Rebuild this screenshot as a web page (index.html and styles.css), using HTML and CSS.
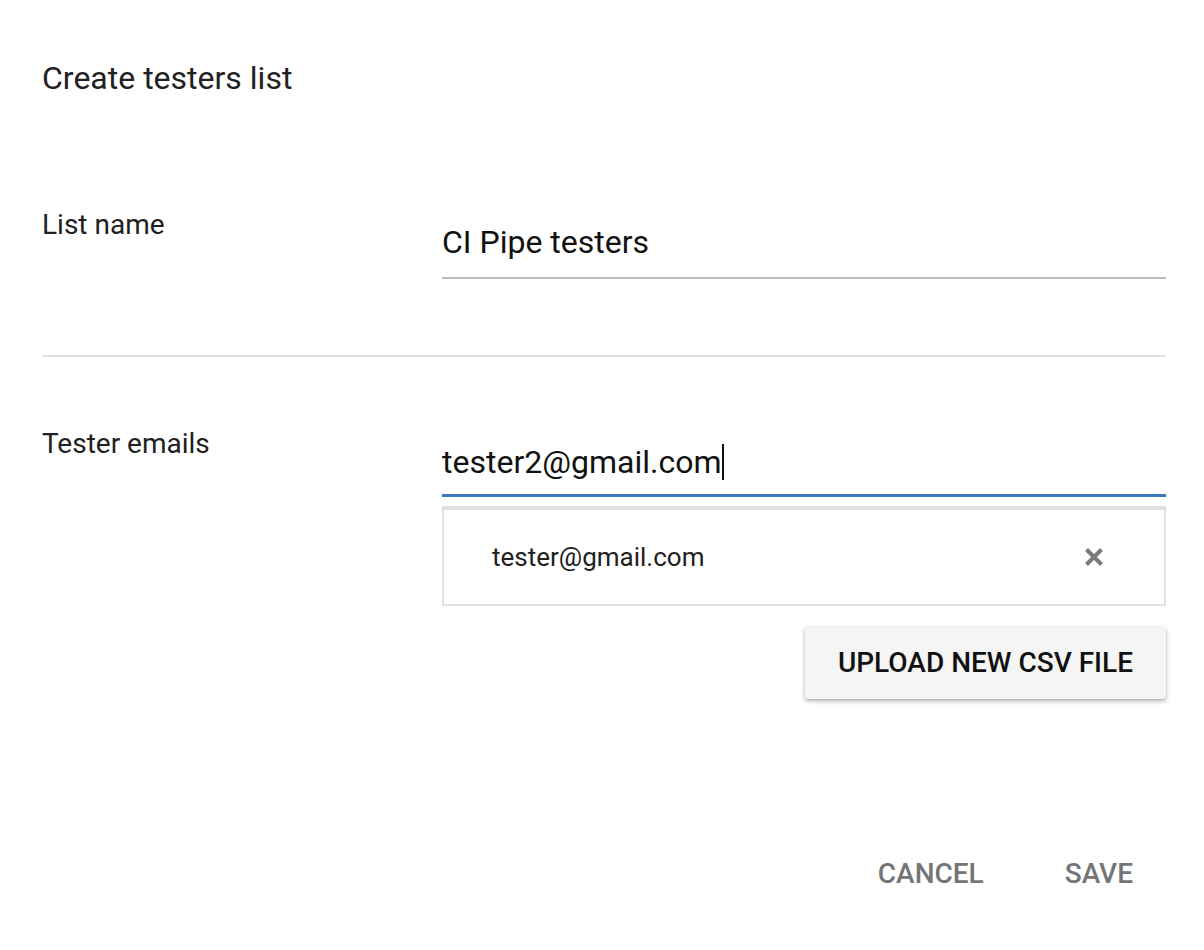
FILE: index.html
```html
<!DOCTYPE html>
<html lang="en">
<head>
<meta charset="utf-8">
<title>Create testers list</title>
<link rel="stylesheet" href="styles.css">
</head>
<body>
<div class="dialog">
  <h1 class="title">Create testers list</h1>

  <div class="row row-name">
    <div class="label">List name</div>
    <div class="field">
      <div class="input">CI Pipe testers</div>
    </div>
  </div>

  <div class="divider"></div>

  <div class="row row-emails">
    <div class="label">Tester emails</div>
    <div class="field">
      <div class="input input-focused">tester2@gmail.com<span class="caret"></span></div>
      <div class="email-list">
        <div class="email-item">
          <span class="email-text">tester@gmail.com</span>
          <svg class="remove-icon" width="20" height="20" viewBox="0 0 20 20" aria-hidden="true">
            <line x1="2.5" y1="2.5" x2="17.5" y2="17.5"></line>
            <line x1="17.5" y1="2.5" x2="2.5" y2="17.5"></line>
          </svg>
        </div>
      </div>
      <div class="upload-row">
        <button class="btn-raised">UPLOAD NEW CSV FILE</button>
      </div>
    </div>
  </div>

  <div class="actions">
    <button class="btn-flat">CANCEL</button>
    <button class="btn-flat">SAVE</button>
  </div>
</div>
</body>
</html>
```

FILE: styles.css
```css
html, body {
  margin: 0;
  padding: 0;
  background: #ffffff;
}

body {
  font-family: Roboto, "Noto Sans", "Liberation Sans", sans-serif;
  color: #212121;
}

.dialog {
  width: 1124px;
  padding: 58px 38px 0 42px;
}

.title {
  margin: 0;
  font-size: 32px;
  line-height: 40px;
  font-weight: 400;
  color: #212121;
}

.row {
  display: flex;
}

.row-name {
  margin-top: 111px;
}

.row-emails {
  margin-top: 71px;
}

.label {
  width: 400px;
  flex: none;
  font-size: 28px;
  line-height: 32px;
  color: #212121;
}

.field {
  flex: 1;
  display: flex;
  flex-direction: column;
}

.input {
  margin-top: 13px;
  font-size: 32px;
  line-height: 40px;
  color: #111111;
  padding-bottom: 15px;
  border-bottom: 2px solid #bdbdbd;
  display: flex;
  align-items: center;
}

.input-focused {
  margin-top: 14px;
  padding-bottom: 12px;
  border-bottom: 3px solid #3b78bd;
}

.caret {
  display: inline-block;
  width: 2px;
  height: 36px;
  margin-left: 1px;
  background: #111111;
}

.divider {
  margin-top: 76px;
  height: 2px;
  background: #e0e0e0;
}

.email-list {
  margin-top: 9px;
  border: 2px solid #e0e0e0;
  border-top-width: 4px;
}

.email-item {
  height: 94px;
  display: flex;
  align-items: center;
  justify-content: space-between;
  padding: 0 60px 0 48px;
}

.email-text {
  font-size: 26px;
  line-height: 32px;
  color: #212121;
}

.remove-icon {
  display: block;
  stroke: #7a7a7a;
  stroke-width: 4;
}

.upload-row {
  display: flex;
  justify-content: flex-end;
  margin-top: 21px;
}

.btn-raised {
  font-family: Roboto, "Noto Sans", "Liberation Sans", sans-serif;
  font-size: 28px;
  font-weight: 500;
  line-height: 72px;
  height: 72px;
  padding: 0 33px;
  border: 0;
  border-radius: 3px;
  background: #f5f5f5;
  color: #111111;
  box-shadow: 0 2px 5px rgba(0, 0, 0, 0.28), 0 1px 2px rgba(0, 0, 0, 0.12);
}

.actions {
  margin-top: 139px;
  display: flex;
  justify-content: flex-end;
  gap: 15px;
}

.btn-flat {
  font-family: Roboto, "Noto Sans", "Liberation Sans", sans-serif;
  font-size: 28px;
  font-weight: 500;
  line-height: 72px;
  height: 72px;
  padding: 0 33px;
  border: 0;
  background: transparent;
  color: #757575;
}
```
